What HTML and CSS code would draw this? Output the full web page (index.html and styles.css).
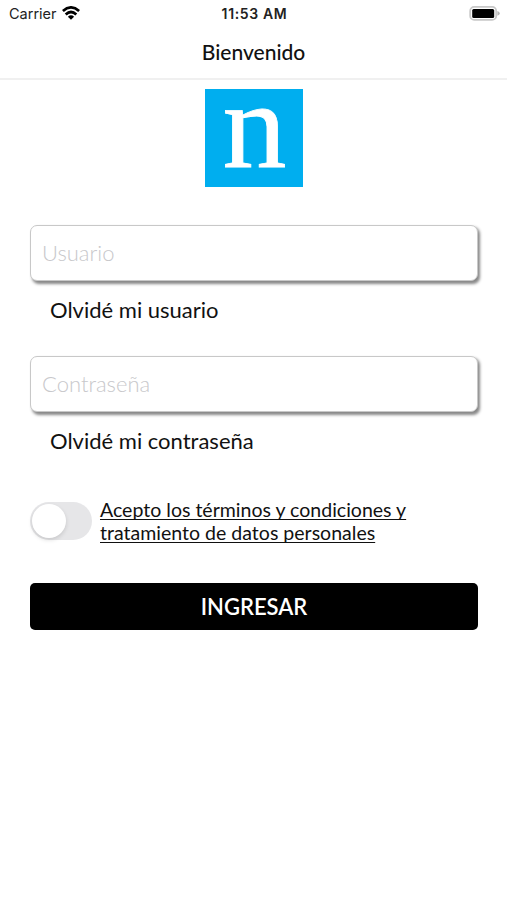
FILE: index.html
```html
<!DOCTYPE html>
<html lang="es">
<head>
<meta charset="utf-8">
<title>Bienvenido</title>
<link rel="stylesheet" href="styles.css">
</head>
<body>
<div class="status">
  <div class="carrier"><span>Carrier</span>
    <svg class="wifi" width="18" height="14" viewBox="0 0 18 14" fill="none" stroke="#000" stroke-width="2.7"><path d="M.9 5Q9-2.2 17.1 5M3.7 8.5Q9 3.5 14.3 8.5"/><path d="M9 13.8L5.9 10.7Q9 8 12.1 10.7Z" fill="#000" stroke="none"/></svg>
  </div>
  <div class="time">11:53 AM</div>
  <svg class="battery" width="31" height="15" viewBox="0 0 31 15"><rect x="1.2" y=".9" width="26" height="13" rx="4" fill="#fff" stroke="#c8c8c8" stroke-width="1.8"/><rect x="3.2" y="2.9" width="22" height="9" rx="1.5" fill="#000"/><path d="M28.4 5Q30.8 6 30.8 7.4T28.4 9.8Z" fill="#b5b5b5"/></svg>
</div>
<header class="title">Bienvenido</header>
<main>
  <svg class="logo" width="98" height="98" viewBox="0 0 98 98"><rect width="98" height="98" fill="#00aeef"/><text class="mark" x="17.5" y="78" textLength="64" lengthAdjust="spacingAndGlyphs">n</text></svg>
  <form class="login">
    <input class="field" type="text" placeholder="Usuario">
    <a class="forgot">Olvidé mi usuario</a>
    <input class="field" type="password" placeholder="Contraseña">
    <a class="forgot">Olvidé mi contraseña</a>
    <div class="terms">
      <span class="switch"><span class="knob"></span></span>
      <a class="terms-link">Acepto los términos y condiciones y<br>tratamiento de datos personales</a>
    </div>
    <button class="submit" type="button">INGRESAR</button>
  </form>
</main>
</body>
</html>
```
FILE: styles.css
```css
* { box-sizing: border-box; }
body { margin: 0; background: #fff; color: #111; font-family: Lato, sans-serif; }
.status { height: 28px; padding: 0 7px 0 9px; display: grid; grid-template-columns: 1fr auto 1fr; align-items: center; font: 14.5px/28px Inter, sans-serif; color: #222; }
.carrier { display: flex; align-items: center; gap: 5px; }
.wifi { display: block; margin-top: -2px; }
.time { font-size: 14px; font-weight: 600; letter-spacing: .65px; }
.battery { justify-self: end; margin-top: -1px; }
.title { height: 52px; border-bottom: 2px solid #f0f0f0; text-align: center; font-size: 21px; font-weight: 500; line-height: 26px; padding-top: 11px; }
.logo { display: block; margin: 9px 0 0 205px; }
.mark { font: 122px "Liberation Serif", serif; fill: #fff; stroke: #fff; stroke-width: .8; }
.login { display: flex; flex-direction: column; padding: 38px 29px 0 30px; }
.field { width: 448px; height: 56px; padding: 0 12px 2px 11px; border: 1.5px solid #c8c8c8; border-radius: 7px; background: #fff; box-shadow: 2px 2.5px 3px #888; font: 300 22px Lato, sans-serif; outline: 0; }
.field::placeholder { color: #c8c8cb; opacity: 1; }
.forgot { height: 75px; padding: 15px 20px 0; font-size: 22px; line-height: 27px; }
.terms { display: flex; height: 66px; margin-top: 11px; gap: 8px; }
.switch { width: 62px; height: 38px; margin-top: 4px; border-radius: 19px; padding: 2px; background: #e6e6e8; }
.knob { display: block; width: 34px; height: 34px; border-radius: 50%; background: #fff; box-shadow: 0 2px 4px #0002; }
.terms-link { font-size: 19.55px; line-height: 23px; text-decoration: underline; text-decoration-thickness: 1px; text-underline-offset: 2px; text-decoration-skip-ink: none; }
.submit { width: 448px; height: 47px; margin-top: 19px; padding: 0; border: 0; border-radius: 5px; background: #000; color: #fff; font: 600 22px Lato, sans-serif; }
```
